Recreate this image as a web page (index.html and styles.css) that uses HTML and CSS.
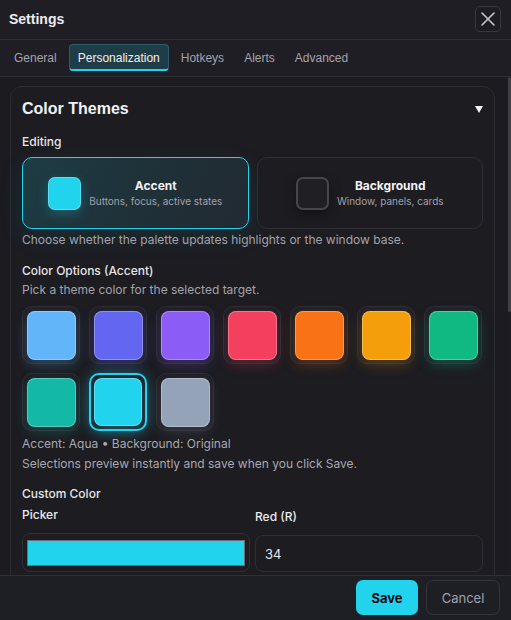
FILE: index.html
```html
<!DOCTYPE html>
<html lang="en">
<head>
<meta charset="utf-8">
<title>Settings</title>
<link rel="stylesheet" href="styles.css">
</head>
<body>
<div class="app">
  <header class="hdr">
    <h1 class="title">Settings</h1>
    <button class="close" aria-label="Close">
      <svg width="14" height="14" viewBox="0 0 14 14"><path d="M1 1 L13 13 M13 1 L1 13" stroke="#c6c6cb" stroke-width="1.6" fill="none" stroke-linecap="round"/></svg>
    </button>
  </header>
  <nav class="tabs">
    <button class="tab">General</button>
    <button class="tab active">Personalization</button>
    <button class="tab">Hotkeys</button>
    <button class="tab">Alerts</button>
    <button class="tab">Advanced</button>
  </nav>
  <div class="body-area">
    <main class="content">
      <section class="card">
        <div class="card-head">
          <h2 class="card-title">Color Themes</h2>
          <svg class="caret" width="8" height="7" viewBox="0 0 8 7"><polygon points="0,0 8,0 4,7" fill="#f2f2f2"/></svg>
        </div>
        <div class="label first">Editing</div>
        <div class="targets">
          <button class="target active">
            <span class="tswatch accent"></span>
            <span class="ttext"><span class="tname">Accent</span><span class="tdesc">Buttons, focus, active states</span></span>
          </button>
          <button class="target">
            <span class="tswatch base"></span>
            <span class="ttext"><span class="tname">Background</span><span class="tdesc">Window, panels, cards</span></span>
          </button>
        </div>
        <p class="hint after-targets">Choose whether the palette updates highlights or the window base.</p>
        <div class="label section">Color Options (Accent)</div>
        <p class="hint">Pick a theme color for the selected target.</p>
        <div class="swatches">
          <button class="sw c-sky"><span class="chip"></span></button>
          <button class="sw c-indigo"><span class="chip"></span></button>
          <button class="sw c-violet"><span class="chip"></span></button>
          <button class="sw c-rose"><span class="chip"></span></button>
          <button class="sw c-orange"><span class="chip"></span></button>
          <button class="sw c-amber"><span class="chip"></span></button>
          <button class="sw c-emerald"><span class="chip"></span></button>
          <button class="sw c-teal"><span class="chip"></span></button>
          <button class="sw c-aqua selected"><span class="chip"></span></button>
          <button class="sw c-slate"><span class="chip"></span></button>
        </div>
        <p class="status first-status">Accent: Aqua • Background: Original</p>
        <p class="status">Selections preview instantly and save when you click Save.</p>
        <div class="label custom">Custom Color</div>
        <div class="fields">
          <div class="field">
            <span class="flabel">Picker</span>
            <div class="picker"><span class="picker-fill"></span></div>
          </div>
          <div class="field">
            <span class="flabel">Red (R)</span>
            <div class="input">34</div>
          </div>
        </div>
      </section>
    </main>
    <div class="scrollbar"><div class="thumb"></div></div>
  </div>
  <footer class="footer">
    <button class="btn save">Save</button>
    <button class="btn cancel">Cancel</button>
  </footer>
</div>
</body>
</html>
```
FILE: styles.css
```css
* { box-sizing: border-box; }
html, body { margin: 0; padding: 0; }
body {
  background: #1b1b20;
  color: #e4e4e7;
  font-family: Inter, "Noto Sans", sans-serif;
  width: 511px;
  height: 620px;
  overflow: hidden;
}
button { font: inherit; color: inherit; background: none; border: 0; padding: 0; margin: 0; cursor: pointer; }
p { margin: 0; }
h1, h2 { margin: 0; }

.app { display: flex; flex-direction: column; height: 620px; }

.hdr {
  height: 40px;
  flex: none;
  display: flex;
  align-items: center;
  justify-content: space-between;
  padding: 0 10px 2px 9px;
  background: #1e1e24;
  border-bottom: 1px solid #2e2e35;
}
.title {
  font-family: "Liberation Sans", Arial, sans-serif;
  font-size: 14px;
  font-weight: 700;
  color: #ececef;
}
.close {
  width: 26px; height: 26px;
  border: 1px solid #37373e;
  border-radius: 5px;
  display: grid; place-items: center;
  background: #1c1c22;
}
.close svg { display: block; }

.tabs {
  height: 37px;
  flex: none;
  display: flex;
  align-items: flex-start;
  gap: 4px;
  padding: 4px 6px 0;
  background: #1e1e24;
  border-bottom: 1px solid #2e2e35;
}
.tab {
  height: 27px;
  padding: 0 8px;
  font-family: "Liberation Sans", Arial, sans-serif;
  font-size: 12px;
  color: #a4a4ac;
  border-radius: 4px;
}
.tab.active {
  color: #f0f0f2;
  background: #1f3d47;
  border: 1px solid #2c5c69;
  border-bottom: 2px solid #22d3ee;
  padding-top: 1px;
}

.body-area {
  flex: 1;
  min-height: 0;
  display: flex;
}
.content {
  flex: 1;
  min-width: 0;
  overflow: hidden;
  padding: 9px 12px 0 10px;
}
.scrollbar {
  width: 4px;
  flex: none;
  display: flex;
  justify-content: flex-end;
  background: #1c1c22;
}
.thumb {
  width: 3px;
  height: 235px;
  background: #3f3f46;
  border-radius: 2px;
}

.card {
  background: #1c1c21;
  border: 1px solid #2c2c33;
  border-radius: 12px;
  padding: 11px 11px 14px;
}
.card-head {
  height: 22px;
  display: flex;
  align-items: center;
  justify-content: space-between;
}
.card-title {
  font-family: "Liberation Sans", Arial, sans-serif;
  font-size: 16px;
  font-weight: 700;
  color: #f2f2f4;
}
.caret { display: block; }

.label {
  font-size: 12px;
  line-height: 16px;
  font-weight: 500;
  color: #e6e6ea;
}
.label.first { margin-top: 14px; }
.label.section { margin-top: 15px; }
.label.custom { margin-top: 12px; }

.targets {
  margin-top: 7px;
  display: grid;
  grid-template-columns: 1fr 1fr;
  gap: 8px;
}
.target {
  height: 72px;
  border: 1px solid #2e2e35;
  border-radius: 10px;
  background: #1c1c21;
  display: flex;
  align-items: center;
  justify-content: center;
  gap: 8px;
}
.target.active {
  border: 1.5px solid #22d3ee;
  background: linear-gradient(120deg, #1d3c44 0%, #1f3038 55%, #222a32 100%);
  box-shadow: 0 8px 26px rgba(34, 211, 238, 0.10);
}
.tswatch {
  width: 33px; height: 33px;
  border-radius: 7px;
  flex: none;
}
.tswatch.accent {
  background: #22d3ee;
  box-shadow: inset 0 0 0 1px rgba(255,255,255,0.25), 0 4px 12px rgba(34,211,238,0.25);
}
.tswatch.base {
  background: #1f1f24;
  border: 2px solid #46464d;
  box-shadow: 0 4px 12px rgba(0,0,0,0.35);
}
.ttext {
  display: flex;
  flex-direction: column;
  align-items: center;
  text-align: center;
}
.tname {
  font-size: 12px;
  line-height: 16px;
  font-weight: 700;
  color: #f2f2f4;
}
.tdesc {
  font-size: 10px;
  line-height: 14px;
  color: #a1a1aa;
}

.hint {
  font-size: 12px;
  line-height: 16px;
  color: #a3a3ab;
  margin-top: 3px;
}
.hint.after-targets { margin-top: 3px; }

.swatches {
  margin-top: 8px;
  display: grid;
  grid-template-columns: repeat(7, 58px);
  gap: 9px;
}
.sw {
  width: 58px; height: 58px;
  border: 1px solid #2d2d34;
  border-radius: 10px;
  background: #1f1f25;
  display: grid;
  place-items: center;
}
.sw.selected {
  border: 2px solid #22d3ee;
  box-shadow: 0 0 14px rgba(34,211,238,0.35);
}
.chip {
  width: 49px; height: 49px;
  border-radius: 8px;
  background: var(--c);
  box-shadow: inset 0 0 0 1px rgba(255,255,255,0.28), 0 5px 14px var(--g);
}
.sw.selected .chip { width: 48px; height: 48px; }
.c-sky { --c: #62b5f8; --g: rgba(98,181,248,0.28); }
.c-indigo { --c: #6366f1; --g: rgba(99,102,241,0.28); }
.c-violet { --c: #8b5cf6; --g: rgba(139,92,246,0.28); }
.c-rose { --c: #f43f5e; --g: rgba(244,63,94,0.26); }
.c-orange { --c: #f97316; --g: rgba(249,115,22,0.26); }
.c-amber { --c: #f59e0b; --g: rgba(245,158,11,0.26); }
.c-emerald { --c: #10b981; --g: rgba(16,185,129,0.30); }
.c-teal { --c: #14b8a6; --g: rgba(20,184,166,0.26); }
.c-aqua { --c: #22d3ee; --g: rgba(34,211,238,0.30); }
.c-slate { --c: #94a3b8; --g: rgba(148,163,184,0.20); }

.status {
  font-size: 12px;
  line-height: 20px;
  color: #a8a8b0;
}
.status.first-status { margin-top: 3px; }

.fields {
  margin-top: 5px;
  display: grid;
  grid-template-columns: 1fr 1fr;
  gap: 5px;
  align-items: end;
}
.field { display: flex; flex-direction: column; }
.flabel {
  font-size: 12px;
  line-height: 16px;
  font-weight: 500;
  color: #ececef;
  margin-bottom: 10px;
}
.picker {
  height: 39px;
  border: 1px solid #2e2e35;
  border-radius: 8px;
  background: #1c1c21;
  padding: 6px 4px 5px 4px;
  display: flex;
}
.picker-fill {
  flex: 1;
  background: #22d3ee;
  border: 1px solid #6a6a70;
}
.input {
  height: 37px;
  border: 1px solid #2e2e35;
  border-radius: 8px;
  background: #1c1c21;
  padding: 0 9px;
  display: flex;
  align-items: center;
  font-size: 13px;
  color: #e6e6ea;
}

.footer {
  height: 45px;
  flex: none;
  background: #1e1e25;
  border-top: 1px solid #2e2e35;
  display: flex;
  justify-content: flex-end;
  align-items: flex-start;
  gap: 8px;
  padding: 4px 11px 0;
}
.btn {
  height: 35px;
  border-radius: 7px;
  font-size: 13px;
}
.btn.save {
  background: #22d3ee;
  color: #0c0c10;
  font-weight: 700;
  width: 62px;
}
.btn.cancel {
  border: 1px solid #34343b;
  color: #a1a1aa;
  width: 74px;
}
```
